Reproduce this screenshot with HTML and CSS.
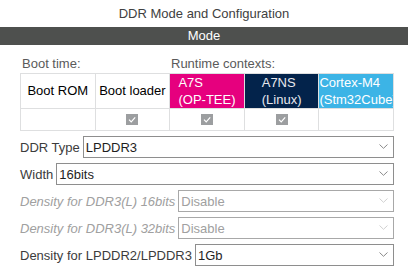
FILE: index.html
```html
<!DOCTYPE html>
<html>
<head>
<meta charset="utf-8">
<link rel="stylesheet" href="styles.css">
</head>
<body>
<div class="title">DDR Mode and Configuration</div>
<div class="bar">Mode</div>
<div class="panel">
  <div class="ctx-head">
    <span class="ctx-label">Boot time:</span>
    <span class="ctx-label">Runtime contexts:</span>
  </div>
  <div class="ctx-grid">
    <div class="cell head">Boot ROM</div>
    <div class="cell head">Boot loader</div>
    <div class="cell head a7s"><span class="two">A7S<br>(OP-TEE)</span></div>
    <div class="cell head a7ns"><span class="two">A7NS<br>(Linux)</span></div>
    <div class="cell head m4"><span class="two">Cortex-M4<br>(Stm32Cube)</span></div>
    <div class="cell chk"></div>
    <div class="cell chk"><span class="box"><svg width="12" height="11" viewBox="0 0 12 11"><path d="M3 5.6 L5.2 7.8 L9.2 3.4" fill="none" stroke="#fff" stroke-width="1.2"/></svg></span></div>
    <div class="cell chk"><span class="box"><svg width="12" height="11" viewBox="0 0 12 11"><path d="M3 5.6 L5.2 7.8 L9.2 3.4" fill="none" stroke="#fff" stroke-width="1.2"/></svg></span></div>
    <div class="cell chk"><span class="box"><svg width="12" height="11" viewBox="0 0 12 11"><path d="M3 5.6 L5.2 7.8 L9.2 3.4" fill="none" stroke="#fff" stroke-width="1.2"/></svg></span></div>
    <div class="cell chk"></div>
  </div>
  <div class="form">
    <div class="row">
      <span class="label">DDR Type</span>
      <div class="select"><span>LPDDR3</span><svg class="chev" width="9" height="5" viewBox="0 0 9 5"><path d="M0.5 0.5 L4.5 4.3 L8.5 0.5" fill="none" stroke="#8a8a8a" stroke-width="1"/></svg></div>
    </div>
    <div class="row">
      <span class="label">Width</span>
      <div class="select"><span>16bits</span><svg class="chev" width="9" height="5" viewBox="0 0 9 5"><path d="M0.5 0.5 L4.5 4.3 L8.5 0.5" fill="none" stroke="#8a8a8a" stroke-width="1"/></svg></div>
    </div>
    <div class="row disabled">
      <span class="label">Density for DDR3(L) 16bits</span>
      <div class="select"><span>Disable</span><svg class="chev" width="9" height="5" viewBox="0 0 9 5"><path d="M0.5 0.5 L4.5 4.3 L8.5 0.5" fill="none" stroke="#d0d0d0" stroke-width="1"/></svg></div>
    </div>
    <div class="row disabled">
      <span class="label">Density for DDR3(L) 32bits</span>
      <div class="select"><span>Disable</span><svg class="chev" width="9" height="5" viewBox="0 0 9 5"><path d="M0.5 0.5 L4.5 4.3 L8.5 0.5" fill="none" stroke="#d0d0d0" stroke-width="1"/></svg></div>
    </div>
    <div class="row">
      <span class="label">Density for LPDDR2/LPDDR3</span>
      <div class="select"><span>1Gb</span><svg class="chev" width="9" height="5" viewBox="0 0 9 5"><path d="M0.5 0.5 L4.5 4.3 L8.5 0.5" fill="none" stroke="#8a8a8a" stroke-width="1"/></svg></div>
    </div>
  </div>
</div>
</body>
</html>
```
FILE: styles.css
```css
* { box-sizing: border-box; }
html, body { margin: 0; padding: 0; background: #fff; }
body {
  font-family: "Liberation Sans", Arial, sans-serif;
  font-size: 13px;
  color: #3c3c3c;
}
.title {
  height: 27px;
  line-height: 27px;
  text-align: center;
  color: #414141;
}
.bar {
  height: 18px;
  line-height: 18px;
  background: #4e504e;
  color: #fff;
  text-align: center;
}
.panel {
  padding: 0 14px 0 20px;
}
.ctx-head {
  display: grid;
  grid-template-columns: 149px 1fr;
  margin-top: 10px;
  margin-bottom: 1px;
  line-height: 17px;
  color: #5a5a5a;
}
.ctx-label { padding-left: 2px; }
.ctx-grid {
  display: grid;
  grid-template-columns: repeat(5, 1fr);
  grid-template-rows: 34px 21px;
  gap: 1px;
  padding: 1px;
  background: #dedfe0;
}
.cell {
  background: #fff;
  overflow: hidden;
  text-align: center;
  white-space: nowrap;
}
.cell.head {
  color: #000;
  line-height: 34px;
}
.cell .two {
  display: inline-block;
  text-align: left;
  line-height: 17px;
  vertical-align: top;
}
.a7s { background: #e6007e; color: #fff !important; }
.a7ns { background: #03234b; color: #e8e8ee !important; }
.m4 { background: #3cb4e6; color: #fff !important; }
.chk {
  display: flex;
  align-items: center;
  justify-content: center;
}
.box {
  display: block;
  width: 12px;
  height: 11px;
  background: #9c9ea0;
}
.box svg { display: block; }
.form {
  display: flex;
  flex-direction: column;
  gap: 5px;
  margin-top: 5px;
}
.row {
  display: flex;
  align-items: center;
  gap: 3px;
  height: 22px;
}
.label {
  white-space: nowrap;
  color: #3c3c3c;
}
.select {
  flex: 1;
  height: 22px;
  border: 1px solid #8e8e8e;
  display: flex;
  align-items: center;
  justify-content: space-between;
  padding: 0 5px 0 2px;
  color: #1e1e1e;
}
.chev { display: block; margin-bottom: 1px; }
.disabled .label { font-style: italic; color: #a0a0a0; }
.disabled .select { color: #a0a0a0; border-color: #a8a8a8; }
```
